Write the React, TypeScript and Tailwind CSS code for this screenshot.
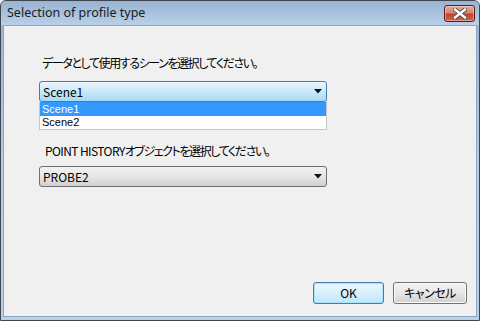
const jp = "font-['Meiryo_UI','Noto_Sans_CJK_JP',sans-serif] [font-feature-settings:'palt']";

function Arrow() {
  return (
    <svg width="8" height="5" viewBox="0 0 8 5" className="shrink-0">
      <path d="M0 0 H8 L4 4.5 Z" fill="#111" />
    </svg>
  );
}

function CloseIcon() {
  return (
    <svg width="14" height="11" viewBox="0 0 14 11">
      <path d="M2 1.5 L12 9.5 M12 1.5 L2 9.5" stroke="#4a4a4a" strokeWidth="4.2" strokeLinecap="square" />
      <path d="M2 1.5 L12 9.5 M12 1.5 L2 9.5" stroke="#ffffff" strokeWidth="2.4" strokeLinecap="square" />
    </svg>
  );
}

export default function App() {
  return (
    <div className="w-[480px] h-[321px] bg-[#f0f0f0]">
      <div className="w-full h-full flex flex-col border border-[#3f4650] rounded-t-[6px] overflow-hidden bg-gradient-to-b from-[#97b3d1] via-[#b3cce6] to-[#b9d1ea]">
        {/* title bar */}
        <div className="h-[24px] shrink-0 flex items-start justify-between pl-[6px] pr-[4px] bg-gradient-to-b from-[#98b4d2] to-[#b8d0e9]">
          <span className="mt-[4px] text-[12.5px] leading-[16px] text-[#1b1b1b] font-['Noto_Sans',sans-serif]">
            Selection of profile type
          </span>
          <button className="mt-[4px] w-[31px] h-[17px] rounded-[3px] border border-[#5a1f1a] flex items-center justify-center bg-[linear-gradient(to_bottom,#e9a99b_0%,#d98470_45%,#c2412f_55%,#d2694f_100%)] shadow-[inset_0_0_0_1px_rgba(255,255,255,0.35)]">
            <CloseIcon />
          </button>
        </div>

        {/* client */}
        <div className="flex-1 mx-[2px] mb-[3px] bg-[#f0f0f0] border border-[#8fa6bf] flex flex-col pl-[35px]">
          <div className={`mt-[29px] ml-[3px] text-[12px] leading-[16px] tracking-[-1.4px] text-black ${jp}`}>
            データとして使用するシーンを選択してください。
          </div>

          <div className="relative mt-[10px] w-[288px]">
            <div className="h-[21px] rounded-[3px] border border-[#3c7fb1] bg-gradient-to-b from-[#eaf6fd] via-[#c9e8f9] to-[#a7d9f5] flex items-center justify-between pl-[3px] pr-[4px]">
              <span className={`text-[12px] leading-[14px] text-black ${jp}`}>Scene1</span>
              <Arrow />
            </div>
            <div className="absolute left-0 top-[21px] w-full bg-white border border-[#c5c5c5] border-t-0 flex flex-col font-['Liberation_Sans',sans-serif] text-[11px]">
              <div className="h-[14px] bg-[#3399ff] text-white pl-[2px] leading-[14px]">Scene1</div>
              <div className="h-[13px] text-black pl-[2px] leading-[13px]">Scene2</div>
            </div>
          </div>

          <div className={`mt-[41px] ml-[6px] text-[12px] leading-[16px] text-black ${jp}`}>
            <span className="tracking-[-0.6px]">POINT HISTORY</span>
            <span className="tracking-[-1.4px]">オブジェクトを選択してください。</span>
          </div>

          <div className="mt-[7px] w-[288px] h-[21px] rounded-[3px] border border-[#707070] bg-gradient-to-b from-[#f2f2f2] via-[#e6e6e6] to-[#cfcfcf] flex items-center justify-between pl-[3px] pr-[4px]">
            <span className={`text-[12px] leading-[14px] text-black ${jp}`}>PROBE2</span>
            <Arrow />
          </div>

          <div className="flex-1" />

          <div className="flex justify-end gap-[9px] pr-[9px] pb-[12px]">
            <button className={`w-[71px] h-[22px] rounded-[3px] border border-[#3c7fb1] bg-gradient-to-b from-[#eaf6fd] via-[#d9effc] to-[#bee6fd] shadow-[inset_0_0_0_1px_#aee2fb] text-[12px] leading-[14px] text-black ${jp}`}>
              OK
            </button>
            <button className={`w-[74px] h-[22px] rounded-[3px] border border-[#707070] bg-gradient-to-b from-[#f2f2f2] via-[#e8e8e8] to-[#d0d0d0] shadow-[inset_0_0_0_1px_#fbfbfb] text-[12px] leading-[14px] tracking-[-0.5px] text-black ${jp}`}>
              キャンセル
            </button>
          </div>
        </div>
      </div>
    </div>
  );
}
